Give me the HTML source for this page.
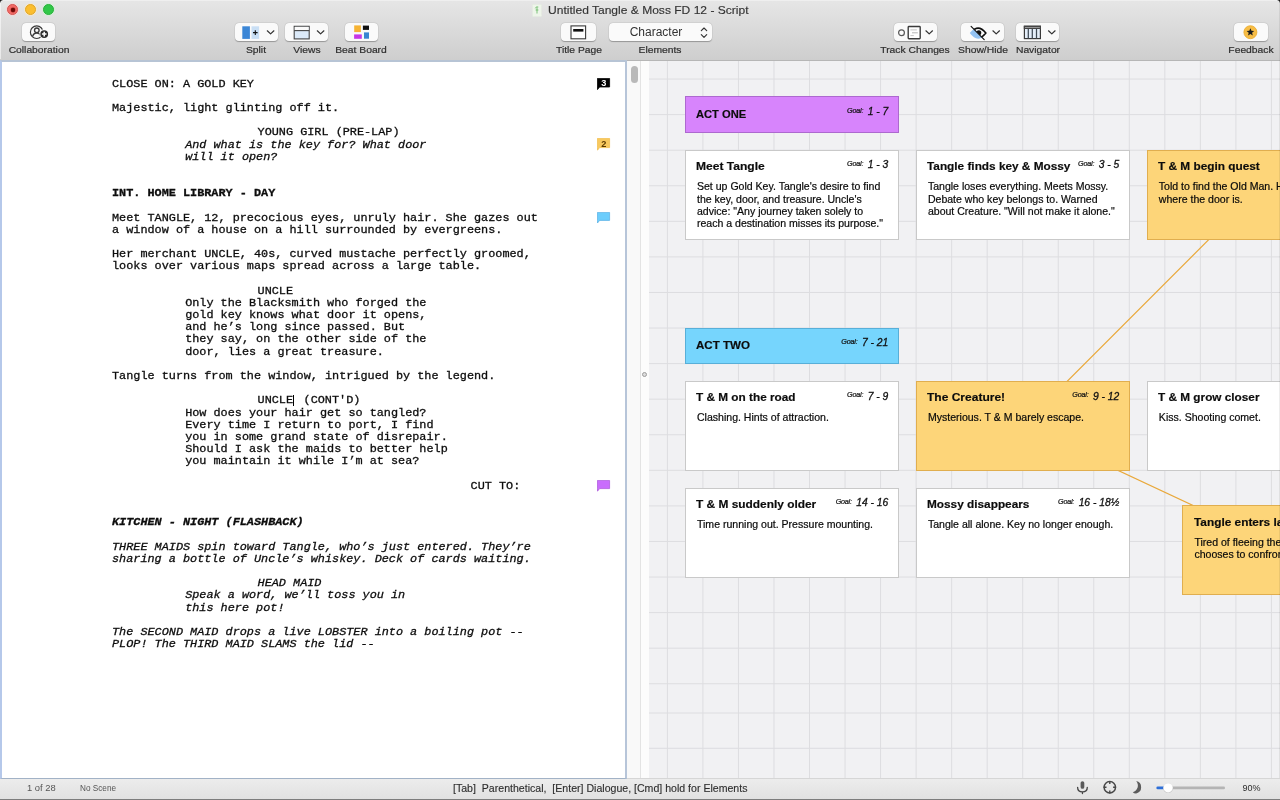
<!DOCTYPE html>
<html lang="en">
<head>
<meta charset="utf-8">
<title>Untitled Tangle &amp; Moss FD 12 - Script</title>
<style>
*{box-sizing:border-box;margin:0;padding:0}
html,body{width:1280px;height:800px;overflow:hidden;background:#ececec;font-family:"Liberation Sans",sans-serif;color:#222}
#win{position:relative;width:1280px;height:800px;overflow:hidden;will-change:transform}
/* ---------- title + toolbar ---------- */
#bar{z-index:2;position:absolute;left:0;top:0;width:1280px;height:60.6px;background:linear-gradient(#e6e6e6,#cecece);border-bottom:1px solid #b6b6b6;box-shadow:inset 0 1px 0 #efefef}
.tl{position:absolute;top:4.25px;width:11px;height:11px;border-radius:50%}
#wtitle{position:absolute;left:547.5px;top:3.9px;font-size:11.4px;color:#333;white-space:nowrap;transform:scaleX(1.057);transform-origin:0 0;-webkit-text-stroke:.15px #333}
.btn{position:absolute;top:22.6px;height:18.4px;background:#fafafa;border-radius:4px;box-shadow:0 .5px 1px rgba(0,0,0,.28),0 0 0 .5px rgba(0,0,0,.06)}
.lab{position:absolute;top:43.5px;font-size:9.5px;line-height:11px;color:#2f2f2f;white-space:nowrap;transform:translateX(-50%) scaleX(1.085);-webkit-text-stroke:.2px #2f2f2f}
/* ---------- script panel ---------- */
#script{z-index:3;position:absolute;left:0;top:59.6px;width:627px;height:719.4px;background:#fff;border:2px solid #b7c5d9;border-top-color:#b7c4d5;border-left-color:#b5c8ea;border-bottom:1.5px solid #a2b2c6}
.l{position:absolute;font-family:"Liberation Mono",monospace;font-size:11.835px;line-height:14px;white-space:pre;color:#0d0d0d;-webkit-text-stroke:.3px #0d0d0d}
.l.i,.l.bi{font-style:italic}
.l.b,.l.bi{font-weight:bold}
/* ---------- scrollbar ---------- */
#sb{position:absolute;left:627px;top:60px;width:22px;height:718px;background:#fcfcfc}
#sb .track{position:absolute;left:0;top:0;width:14px;height:718px;background:#f9f9f9;border-right:1px solid #e3e3e3}
#sb .thumb{position:absolute;left:3.5px;top:6px;width:7px;height:17px;border-radius:3.5px;background:#b9b9b9}
#sb .grip{position:absolute;left:15px;top:312px;width:5px;height:5px;border-radius:50%;border:1.3px solid #9c9c9c;background:#dcdcdc}
/* ---------- board ---------- */
#board{position:absolute;left:649px;top:60px;width:631px;height:718px;background-color:#f1f1f3;overflow:hidden}
#grid{position:absolute;left:0;top:0;width:631px;height:718px}
.card{position:absolute;border:1px solid #c9c9c9;background:#fff}
.card.purple{background:#d784fc;border-color:#ad69cf}
.card.blue{background:#76d5fd;border-color:#58afd8}
.card.yellow{background:#fdd579;border-color:#e0ae4f}
.ttl{position:absolute;left:10.5px;top:9.5px;font-weight:bold;font-size:11.3px;line-height:13px;color:#0c0c0c;-webkit-text-stroke:.18px #0c0c0c;white-space:nowrap;transform-origin:0 0}
.act .ttl{top:10.2px}
.goal{position:absolute;right:9.5px;top:3.7px;white-space:nowrap;font-style:italic;color:#111}
.gl{font-size:7.2px;letter-spacing:-.2px;position:relative;top:-2.5px;-webkit-text-stroke:.2px #111}
.gn{font-size:10.3px;-webkit-text-stroke:.3px #111}
.body{position:absolute;left:11.3px;top:29.5px;font-size:10.56px;line-height:12.4px;color:#0a0a0a;white-space:nowrap;-webkit-text-stroke:.2px #0a0a0a}
.conn{position:absolute;left:0;top:0}
/* ---------- status bar ---------- */
#status{position:absolute;left:0;top:779px;width:1280px;height:21px;background:linear-gradient(#ececec,#e1e1e1);box-shadow:0 -1px 0 #d6d6d6;font-size:8.6px;color:#555}
#status span{position:absolute;top:4.2px;white-space:nowrap;transform-origin:0 0}
</style>
</head>
<body>
<div id="win">
<div id="bar">
  <div class="tl" style="left:7.4px;background:#f46c68;border:1px solid #d2544f;box-shadow:0 0 0 .8px rgba(255,205,205,.75)"><i style="position:absolute;left:2.6px;top:2.6px;width:3.8px;height:3.8px;border-radius:50%;background:#6a0a06;box-shadow:0 0 1px .4px #8e1712"></i></div>
  <div class="tl" style="left:25.4px;background:#fbbe2f;border:1px solid #e0a528;box-shadow:0 0 0 .8px rgba(255,235,190,.75)"></div>
  <div class="tl" style="left:42.9px;background:#31c748;border:1px solid #2aae3b;box-shadow:0 0 0 .8px rgba(200,245,205,.75)"></div>
  <div id="wtitle">Untitled Tangle &amp; Moss FD 12 - Script</div>
  <!-- Collaboration -->
<div class="btn" style="left:22px;width:33.3px">
 <svg width="34" height="19" viewBox="0 0.400 34 19" style="position:absolute;left:0;top:0">
  <circle cx="14.700" cy="9.600" r="6.300" fill="none" stroke="#3a3a3a" stroke-width="1.200"/>
  <circle cx="14.800" cy="7.700" r="2.300" fill="none" stroke="#3a3a3a" stroke-width="1.350"/>
  <path d="M10.600 13.800c.6-2.300 2.100-3.400 4.200-3.400s3.600 1.100 4.200 3.400" fill="none" stroke="#3a3a3a" stroke-width="1.350"/>
  <circle cx="22.200" cy="11.500" r="4.800" fill="#fafafa"/>
  <circle cx="22.200" cy="11.500" r="3.900" fill="#2b2b2b"/>
  <path d="M22.200 9.200v4.600M19.900 11.500h4.600" stroke="#fff" stroke-width="1.500"/>
 </svg>
</div>
<div class="lab" style="left:38.500px">Collaboration</div>
<!-- Split -->
<div class="btn" style="left:234.5px;width:43px">
 <svg width="43" height="19" viewBox="0 0 43 19" style="position:absolute;left:0;top:0">
  <rect x="7.3" y="3.3" width="7.6" height="12.6" fill="#3b86d6"/>
  <rect x="16.5" y="3.3" width="7.6" height="12.6" fill="#c9dff5"/>
  <path d="M20.3 7.3v4.6M18 9.6h4.6" stroke="#111" stroke-width="1.1"/>
  <path d="M32.3 7.8l3.3 3.1 3.3-3.1" fill="none" stroke="#333" stroke-width="1.2" stroke-linecap="round" stroke-linejoin="round"/>
 </svg>
</div>
<div class="lab" style="left:256px">Split</div>
<!-- Views -->
<div class="btn" style="left:285px;width:43px">
 <svg width="43" height="19" viewBox="0 0 43 19" style="position:absolute;left:0;top:0">
  <rect x="9.2" y="3.3" width="15" height="12.6" fill="#dbe9f8" stroke="#444" stroke-width="1.1"/>
  <rect x="9.75" y="3.85" width="13.9" height="3.2" fill="#fafafa"/>
  <path d="M9.2 7.6h15" stroke="#444" stroke-width="1.1"/>
  <path d="M32.3 7.8l3.3 3.1 3.3-3.1" fill="none" stroke="#333" stroke-width="1.2" stroke-linecap="round" stroke-linejoin="round"/>
 </svg>
</div>
<div class="lab" style="left:306.5px">Views</div>
<!-- Beat Board -->
<div class="btn" style="left:344.5px;width:33.5px">
 <svg width="34" height="19" viewBox="0 0 34 19" style="position:absolute;left:0;top:0">
  <rect x="9.2" y="2.4" width="6.7" height="6.7" fill="#f6b333"/>
  <rect x="17.9" y="2.6" width="6.1" height="4.3" fill="#111"/>
  <rect x="9.1" y="11.4" width="7.7" height="4.4" fill="#c737e6"/>
  <rect x="19" y="9.400" width="5" height="6.300" fill="#3886d2"/>
 </svg>
</div>
<div class="lab" style="left:361px">Beat Board</div>
<!-- Title Page -->
<div class="btn" style="left:561px;width:34.5px">
 <svg width="35" height="19" viewBox="0 0 35 19" style="position:absolute;left:0;top:0">
  <rect x="10" y="2.9" width="14.6" height="12.9" fill="#fdfdfd" stroke="#3a3a3a" stroke-width="1.1"/>
  <rect x="12.2" y="6" width="10.2" height="2.6" fill="#111"/>
 </svg>
</div>
<div class="lab" style="left:578.5px">Title Page</div>
<!-- Elements -->
<div class="btn" style="left:609px;width:103px">
 <div style="position:absolute;left:0;width:94px;top:2.5px;text-align:center;font-size:12px;color:#333">Character</div>
 <svg width="12" height="19" viewBox="0 0 12 19" style="position:absolute;left:89px;top:0">
  <path d="M3.3 7.7l2.7-2.7 2.7 2.7M3.3 11.6l2.7 2.7 2.7-2.7" fill="none" stroke="#333" stroke-width="1.15" stroke-linecap="round" stroke-linejoin="round"/>
 </svg>
</div>
<div class="lab" style="left:660px">Elements</div>
<!-- Track Changes -->
<div class="btn" style="left:894px;width:42.5px">
 <svg width="43" height="19" viewBox="0 0 43 19" style="position:absolute;left:0;top:0">
  <circle cx="7.500" cy="9.700" r="2.900" fill="#fdfdfd" stroke="#585858" stroke-width="1.200"/>
  <rect x="14.200" y="3.500" width="12" height="12.200" rx=".8" fill="#fdfdfd" stroke="#3a3a3a" stroke-width="1.350"/>
  <path d="M16.400 6.900h6.400" stroke="#c4c4c4" stroke-width="1"/>
  <path d="M18 9.800h5.800" stroke="#b4b4b4" stroke-width="1"/>
  <path d="M16.400 12.600h3.400" stroke="#c4c4c4" stroke-width="1"/>
  <path d="M31.900 7.800l3.300 3.100 3.300-3.100" fill="none" stroke="#333" stroke-width="1.200" stroke-linecap="round" stroke-linejoin="round"/>
 </svg>
</div>
<div class="lab" style="left:915.3px">Track Changes</div>
<!-- Show/Hide -->
<div class="btn" style="left:961.3px;width:42.7px">
 <svg width="43" height="19" viewBox="-0.5 0 43 19" style="position:absolute;left:0;top:0">
  <defs>
   <clipPath id="cpA"><path d="M9.600 3.450L22.700 16.550H43V-5H9.600z"/></clipPath>
   <clipPath id="cpB"><path d="M9.600 3.450L22.700 16.550V25H-5V3.450z"/></clipPath>
  </defs>
  <path d="M8.300 10.100Q16.600 -1.200 24.900 10.100Q16.600 21.400 8.300 10.100z" fill="#93c2f1" clip-path="url(#cpB)"/>
  <g clip-path="url(#cpA)">
   <path d="M8.900 10.100Q16.600 .200 24.300 10.100Q16.600 20 8.900 10.100z" fill="#fbfbfb" stroke="#111" stroke-width="1.700"/>
   <circle cx="17.300" cy="9.700" r="2.500" fill="#111"/>
  </g>
  <path d="M9.600 3.450L22.700 16.550" stroke="#111" stroke-width="1.150" stroke-linecap="round"/>
  <path d="M31.400 7.800l3.300 3.100 3.300-3.100" fill="none" stroke="#333" stroke-width="1.200" stroke-linecap="round" stroke-linejoin="round"/>
 </svg>
</div>
<div class="lab" style="left:982.6px">Show/Hide</div>
<!-- Navigator -->
<div class="btn" style="left:1016px;width:43px">
 <svg width="43" height="19" viewBox="0 0 43 19" style="position:absolute;left:0;top:0">
  <rect x="8.400" y="3.300" width="16" height="12.300" fill="#e4eef9" stroke="#3a3a3a" stroke-width="1.200"/>
  <rect x="7.800" y="2.700" width="17.200" height="3.300" fill="#444"/>
  <path d="M9 4.500h14.800" stroke="#b9b9b9" stroke-width=".7"/>
  <path d="M12.300 6v9.600M16.300 6v9.600M20.500 6v9.600" stroke="#3f4a55" stroke-width="1.250"/>
  <path d="M32.500 7.800l3.300 3.100 3.300-3.100" fill="none" stroke="#333" stroke-width="1.200" stroke-linecap="round" stroke-linejoin="round"/>
 </svg>
</div>
<div class="lab" style="left:1037.700px">Navigator</div>
<!-- Feedback -->
<div class="btn" style="left:1234px;width:33.500px">
 <svg width="34" height="19" viewBox="0 0 34 19" style="position:absolute;left:0;top:0">
  <circle cx="16.400" cy="9.200" r="6.500" fill="#f7bd45" stroke="#e9a92c" stroke-width=".8"/>
  <path transform="translate(0,-.4)" d="M16.400 5.700l1.100 2.500 2.700.2-2.100 1.800.7 2.700-2.400-1.500-2.400 1.500.7-2.700-2.100-1.800 2.700-.2z" fill="#1d1d1d"/>
 </svg>
</div>
<div class="lab" style="left:1250.600px">Feedback</div>
<!-- doc icon -->
<svg width="10" height="13" viewBox="0 0 10 13" style="position:absolute;left:532px;top:3.500px">
 <rect x=".3" y=".3" width="9.400" height="12.400" rx="1" fill="#eef5ea" stroke="#dfe6dc" stroke-width=".6"/>
 <path d="M3.300 4.300c.4-1.300 1.600-1.700 3-1.300M5 3v6.500M3.600 6h2.800" fill="none" stroke="#69b965" stroke-width=".85"/>
</svg>

  <div style="position:absolute;left:0;top:0;width:3px;height:3px;background:radial-gradient(circle at 100% 100%,transparent 2.4px,#1a1a1a 3.2px)"></div>
  <div style="position:absolute;right:0;top:0;width:3px;height:3px;background:radial-gradient(circle at 0 100%,transparent 2.4px,#1a1a1a 3.2px)"></div>
</div>

<div id="script">
</div>
<div id="scripttext" style="position:absolute;left:0;top:0;z-index:4">
<div class="l" style="left:112.00px;top:76.60px">CLOSE ON: A GOLD KEY</div>
<div class="l" style="left:112.00px;top:100.97px">Majestic, light glinting off it.</div>
<div class="l" style="left:257.55px;top:125.34px">YOUNG GIRL (PRE-LAP)</div>
<div class="l i" style="left:185.13px;top:137.53px">And what is the key for? What door</div>
<div class="l i" style="left:185.13px;top:149.71px">will it open?</div>
<div class="l b" style="left:112.00px;top:186.27px">INT. HOME LIBRARY - DAY</div>
<div class="l" style="left:112.00px;top:210.64px">Meet TANGLE, 12, precocious eyes, unruly hair. She gazes out</div>
<div class="l" style="left:112.00px;top:222.82px">a window of a house on a hill surrounded by evergreens.</div>
<div class="l" style="left:112.00px;top:247.19px">Her merchant UNCLE, 40s, curved mustache perfectly groomed,</div>
<div class="l" style="left:112.00px;top:259.38px">looks over various maps spread across a large table.</div>
<div class="l" style="left:257.55px;top:283.75px">UNCLE</div>
<div class="l" style="left:185.13px;top:295.93px">Only the Blacksmith who forged the</div>
<div class="l" style="left:185.13px;top:308.12px">gold key knows what door it opens,</div>
<div class="l" style="left:185.13px;top:320.30px">and he’s long since passed. But</div>
<div class="l" style="left:185.13px;top:332.49px">they say, on the other side of the</div>
<div class="l" style="left:185.13px;top:344.67px">door, lies a great treasure.</div>
<div class="l" style="left:112.00px;top:369.04px">Tangle turns from the window, intrigued by the legend.</div>
<div class="l" style="left:257.55px;top:393.41px">UNCLE</div>
<div class="l" style="left:303.56px;top:393.41px">(CONT&#x27;D)</div>
<div class="l" style="left:185.13px;top:405.60px">How does your hair get so tangled?</div>
<div class="l" style="left:185.13px;top:417.78px">Every time I return to port, I find</div>
<div class="l" style="left:185.13px;top:429.97px">you in some grand state of disrepair.</div>
<div class="l" style="left:185.13px;top:442.15px">Should I ask the maids to better help</div>
<div class="l" style="left:185.13px;top:454.34px">you maintain it while I’m at sea?</div>
<div class="l" style="left:470.55px;top:478.71px">CUT TO:</div>
<div class="l bi" style="left:112.00px;top:515.26px">KITCHEN - NIGHT (FLASHBACK)</div>
<div class="l i" style="left:112.00px;top:539.63px">THREE MAIDS spin toward Tangle, who’s just entered. They’re</div>
<div class="l i" style="left:112.00px;top:551.82px">sharing a bottle of Uncle’s whiskey. Deck of cards waiting.</div>
<div class="l i" style="left:257.55px;top:576.19px">HEAD MAID</div>
<div class="l i" style="left:185.13px;top:588.37px">Speak a word, we’ll toss you in</div>
<div class="l i" style="left:185.13px;top:600.56px">this here pot!</div>
<div class="l i" style="left:112.00px;top:624.93px">The SECOND MAID drops a live LOBSTER into a boiling pot --</div>
<div class="l i" style="left:112.00px;top:637.11px">PLOP! The THIRD MAID SLAMS the lid --</div>
<svg class="flag" width="14" height="14" viewBox="0 0 14 14" style="position:absolute;left:596.8px;top:77.5px"><path d="M.4 .4H12.6V9.0H2.6L.5 11.6V9.0H.4Z" fill="#000" stroke="#000" stroke-width=".8" stroke-linejoin="round"/><text x="6.7" y="8.0" font-family="Liberation Sans, sans-serif" font-weight="bold" font-size="9.2" text-anchor="middle" fill="#fff">3</text></svg>
<svg class="flag" width="14" height="14" viewBox="0 0 14 14" style="position:absolute;left:596.8px;top:137.8px"><path d="M.4 .4H12.6V9.6H2.6L.5 12.2V9.6H.4Z" fill="#f8c95f" stroke="#f3bf4f" stroke-width=".8" stroke-linejoin="round"/><text x="6.7" y="9.2" font-family="Liberation Sans, sans-serif" font-weight="bold" font-size="9.2" text-anchor="middle" fill="#5a3900">2</text></svg>
<svg class="flag" width="14" height="14" viewBox="0 0 14 14" style="position:absolute;left:596.8px;top:211.8px"><path d="M.4 .4H12.6V8.4H2.6L.5 11.0V8.4H.4Z" fill="#6ccdfc" stroke="#5fb4e6" stroke-width=".8" stroke-linejoin="round"/></svg>
<svg class="flag" width="14" height="14" viewBox="0 0 14 14" style="position:absolute;left:596.8px;top:479.8px"><path d="M.4 .4H12.6V8.6H2.6L.5 11.2V8.6H.4Z" fill="#c96dfc" stroke="#ad5cdc" stroke-width=".8" stroke-linejoin="round"/></svg>
<div id="caret" style="position:absolute;left:292.6px;top:394.6px;width:1.1px;height:11.6px;background:#000"></div>
</div>

<div id="sb"><div class="track"></div><div class="thumb"></div><div class="grip"></div></div>

<div id="board">
  <svg id="grid" width="631" height="718" viewBox="649 60 631 718"><path d="M649 79.05H1280M649 114.62H1280M649 150.19H1280M649 185.76H1280M649 221.33H1280M649 256.90H1280M649 292.47H1280M649 328.04H1280M649 363.61H1280M649 399.18H1280M649 434.75H1280M649 470.32H1280M649 505.89H1280M649 541.46H1280M649 577.03H1280M649 612.60H1280M649 648.17H1280M649 683.74H1280M649 713.00H1280M649 748.30H1280M667.40 60V778M702.93 60V778M738.46 60V778M773.99 60V778M809.52 60V778M845.05 60V778M880.58 60V778M916.11 60V778M951.64 60V778M987.17 60V778M1022.70 60V778M1058.23 60V778M1093.76 60V778M1129.29 60V778M1164.82 60V778M1200.35 60V778M1235.88 60V778M1271.41 60V778" stroke="#dddde0" stroke-width="1" fill="none"/></svg>
</div>
<div id="boardlayer" style="position:absolute;left:0;top:0;width:1280px;height:778px;overflow:hidden;clip-path:inset(60px 0 0 649px)">
<svg class="conn" width="1280" height="800" viewBox="0 0 1280 800"><path d="M1253.6 194.7L1022.7 425.9L1289.2 550.4" fill="none" stroke="#e9a83a" stroke-width="1.2"/></svg>
<div class="card act purple" style="left:684.66px;top:96.33px;width:214.18px;height:36.57px"><div class="ttl" style="transform:scaleX(0.9874)">ACT ONE</div><div class="goal"><span class="gl">Goal:</span> <span class="gn">1 - 7</span></div></div>
<div class="card white" style="left:684.66px;top:149.69px;width:214.18px;height:89.92px"><div class="ttl" style="transform:scaleX(1.0675)">Meet Tangle</div><div class="goal"><span class="gl">Goal:</span> <span class="gn">1 - 3</span></div><div class="body">Set up Gold Key. Tangle's desire to find<br>the key, door, and treasure. Uncle's<br>advice: "Any journey taken solely to<br>reach a destination misses its purpose."</div></div>
<div class="card white" style="left:915.61px;top:149.69px;width:214.18px;height:89.92px"><div class="ttl" style="transform:scaleX(1.0446)">Tangle finds key &amp; Mossy</div><div class="goal"><span class="gl">Goal:</span> <span class="gn">3 - 5</span></div><div class="body">Tangle loses everything. Meets Mossy.<br>Debate who key belongs to. Warned<br>about Creature. "Will not make it alone."</div></div>
<div class="card yellow" style="left:1146.56px;top:149.69px;width:214.18px;height:89.92px"><div class="ttl" style="transform:scaleX(1.0465)">T &amp; M begin quest</div><div class="body">Told to find the Old Man. He knows<br>where the door is.</div></div>
<div class="card act blue" style="left:684.66px;top:327.54px;width:214.18px;height:36.57px"><div class="ttl" style="transform:scaleX(1.0243)">ACT TWO</div><div class="goal"><span class="gl">Goal:</span> <span class="gn">7 - 21</span></div></div>
<div class="card white" style="left:684.66px;top:380.90px;width:214.18px;height:89.92px"><div class="ttl" style="transform:scaleX(1.0431)">T &amp; M on the road</div><div class="goal"><span class="gl">Goal:</span> <span class="gn">7 - 9</span></div><div class="body">Clashing. Hints of attraction.</div></div>
<div class="card yellow" style="left:915.61px;top:380.90px;width:214.18px;height:89.92px"><div class="ttl" style="transform:scaleX(1.0633)">The Creature!</div><div class="goal"><span class="gl">Goal:</span> <span class="gn">9 - 12</span></div><div class="body">Mysterious. T &amp; M barely escape.</div></div>
<div class="card white" style="left:1146.56px;top:380.90px;width:214.18px;height:89.92px"><div class="ttl" style="transform:scaleX(1.0432)">T &amp; M grow closer</div><div class="body">Kiss. Shooting comet.</div></div>
<div class="card white" style="left:684.66px;top:487.61px;width:214.18px;height:89.92px"><div class="ttl" style="transform:scaleX(1.0527)">T &amp; M suddenly older</div><div class="goal"><span class="gl">Goal:</span> <span class="gn">14 - 16</span></div><div class="body">Time running out. Pressure mounting.</div></div>
<div class="card white" style="left:915.61px;top:487.61px;width:214.18px;height:89.92px"><div class="ttl" style="transform:scaleX(1.0454)">Mossy disappears</div><div class="goal"><span class="gl">Goal:</span> <span class="gn">16 - 18½</span></div><div class="body">Tangle all alone. Key no longer enough.</div></div>
<div class="card yellow" style="left:1182.09px;top:505.39px;width:214.18px;height:89.92px"><div class="ttl" style="transform:scaleX(1.0480)">Tangle enters lair</div><div class="body">Tired of fleeing the Creature, Tangle<br>chooses to confront it.</div></div>
</div>

<div style="position:absolute;left:1279px;top:1px;width:1px;height:777px;background:rgba(0,0,0,.07);z-index:5"></div>
<div style="position:absolute;left:0;top:3px;width:1px;height:56px;background:rgba(255,255,255,.55);z-index:5"></div>
<div id="status">
  <span style="left:27.3px;transform:scaleX(1.09)">1 of 28</span>
  <span style="left:80px;transform:scaleX(.954)">No Scene</span>
  <span style="left:452.5px;color:#2e2e2e;font-size:10.2px;top:3.6px;transform:scaleX(1.038);-webkit-text-stroke:.12px #2e2e2e">[Tab]&nbsp; Parenthetical,&nbsp; [Enter] Dialogue, [Cmd] hold for Elements</span>
  <span style="left:1242.6px;color:#2e2e2e;font-size:9px;top:3.8px">90%</span>
  <svg width="160" height="20" viewBox="1070 779 160 20" style="position:absolute;left:1070px;top:-0.7px">
    <rect x="1080.6" y="782.2" width="3.7" height="7.6" rx="1.85" fill="#5a5a5a"/>
    <path d="M1077.6 788.3c0 3 2.200 4.600 4.850 4.600s4.850-1.600 4.850-4.600M1082.450 792.900v1.700" fill="none" stroke="#444" stroke-width="1.300" stroke-linecap="round"/>
    <circle cx="1109.800" cy="788.300" r="5.700" fill="none" stroke="#484848" stroke-width="1.500"/>
    <path d="M1109.800 782v3M1109.800 791.600v3M1103.500 788.300h3M1113.100 788.300h3" stroke="#484848" stroke-width="1.400"/>
    <path d="M1136.200 782.100a6.300 6.300 0 0 1 0 12.300a4.200 4.200 0 0 1-3.400-1.200a6.800 6.800 0 0 0 3.400-11.100z" fill="#5c5c5c"/>
    <rect x="1168" y="787.600" width="57" height="2.600" rx="1.300" fill="#b4b4b4"/>
    <rect x="1156.400" y="787.500" width="10" height="2.800" rx="1.300" fill="#2d6fd8"/>
    <circle cx="1168.100" cy="789.200" r="4.900" fill="#c9c9c9"/>
    <circle cx="1168.100" cy="788.800" r="4.600" fill="#fff"/>
  </svg>
  <div style="position:absolute;left:0;bottom:0;width:1280px;height:1.500px;background:#7d7d7d"></div>
</div>
</div>
</body>
</html>
